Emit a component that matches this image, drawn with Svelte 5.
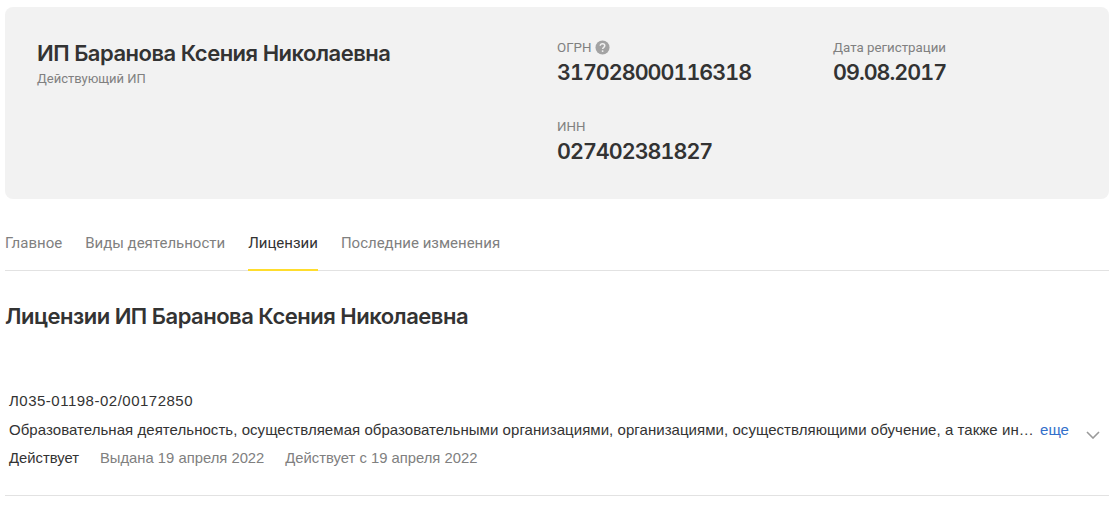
<script>
  const tabs = ['Главное', 'Виды деятельности', 'Лицензии', 'Последние изменения'];
  let active = $state('Лицензии');
</script>

<main class="page">
  <section class="summary">
    <div class="who">
      <h1>ИП Баранова Ксения Николаевна</h1>
      <p class="muted">Действующий ИП</p>
    </div>
    <div class="facts">
      <div class="fact">
        <div class="label">
          ОГРН
          <svg class="help" viewBox="0 0 16 16" width="15" height="15" aria-hidden="true">
            <circle cx="8" cy="8" r="7.5" fill="#a3a3a3" />
            <path d="M5.6 6.2c0-1.4 1-2.2 2.4-2.2s2.4.8 2.4 2.1c0 1-.6 1.5-1.3 2-.6.4-.9.7-.9 1.4" fill="none" stroke="#f2f2f2" stroke-width="1.6" />
            <circle cx="8.1" cy="11.8" r="1" fill="#f2f2f2" />
          </svg>
        </div>
        <div class="value">317028000116318</div>
      </div>
      <div class="fact">
        <div class="label">Дата регистрации</div>
        <div class="value">09.08.2017</div>
      </div>
      <div class="fact">
        <div class="label">ИНН</div>
        <div class="value">027402381827</div>
      </div>
    </div>
  </section>

  <nav class="tabs">
    {#each tabs as tab}
      <button class:active={active === tab} onclick={() => (active = tab)}>{tab}</button>
    {/each}
  </nav>

  <h2>Лицензии ИП Баранова Ксения Николаевна</h2>

  <article class="license">
    <div class="body">
      <div class="number">Л035-01198-02/00172850</div>
      <div class="desc">
        <span class="clip">Образовательная деятельность, осуществляемая образовательными организациями, организациями, осуществляющими обучение, а также индивидуальными предпринимателями</span>
        <a href="#more">еще</a>
      </div>
      <div class="meta">
        <span class="state">Действует</span>
        <span>Выдана 19 апреля 2022</span>
        <span>Действует с 19 апреля 2022</span>
      </div>
    </div>
    <svg class="chevron" viewBox="0 0 14 8" width="14" height="8" aria-hidden="true">
      <path d="M1 1l6 6 6-6" fill="none" stroke="#9a9a9a" stroke-width="1.6" />
    </svg>
  </article>
</main>

<style>
  :global(body) {
    background: #fff;
    color: #333;
    font-family: Roboto, "Liberation Sans", sans-serif;
  }

  .page {
    padding: 7px 3px 20px 5px;
  }

  .summary {
    display: flex;
    height: 192px;
    box-sizing: border-box;
    padding: 32px 32px 0;
    background: #f2f2f2;
    border-radius: 8px;
  }

  .who {
    width: 520px;
  }

  h1 {
    margin: 0;
    font: 600 22px/28px Inter, Roboto, sans-serif;
    letter-spacing: -0.5px;
  }

  .muted {
    margin: 4px 0 0;
    font-size: 13px;
    line-height: 16px;
    color: #808080;
  }

  .facts {
    display: grid;
    grid-template-columns: 276px 1fr;
    row-gap: 32px;
    align-content: start;
  }

  .label {
    display: flex;
    align-items: center;
    gap: 4px;
    height: 16px;
    font-size: 13.3px;
    color: #808080;
  }

  .help {
    display: block;
  }

  .value {
    margin-top: 3px;
    font: 600 21.5px/28px Inter, Roboto, sans-serif;
    font-variant-numeric: tabular-nums;
    letter-spacing: -0.97px;
  }

  .tabs {
    display: flex;
    gap: 23px;
    margin-top: 17px;
    border-bottom: 1px solid #e2e2e2;
  }

  .tabs button {
    height: 55px;
    margin-bottom: -1px;
    padding: 0;
    border: 0;
    border-bottom: 2px solid transparent;
    background: none;
    font: 15px Roboto, sans-serif;
    color: #808080;
    cursor: pointer;
  }

  .tabs button.active {
    color: #333;
    border-bottom-color: #ffdd2d;
  }

  h2 {
    margin: 32px 0 0;
    font: 600 22px/26px Inter, Roboto, sans-serif;
    letter-spacing: -0.5px;
  }

  .license {
    display: flex;
    align-items: center;
    gap: 17px;
    margin-top: 59px;
    padding: 3px 9px 27px 4px;
    border-bottom: 1px solid #e2e2e2;
  }

  .body {
    flex: 1;
    min-width: 0;
  }

  .number {
    font: 15px/20px "Liberation Sans", sans-serif;
    letter-spacing: 0.5px;
  }

  .desc {
    display: flex;
    gap: 5px;
    margin-top: 9px;
    font: 15px/20px "Liberation Sans", sans-serif;
    letter-spacing: 0.05px;
  }

  .clip {
    flex: 1;
    min-width: 0;
    overflow: hidden;
    white-space: nowrap;
    text-overflow: ellipsis;
  }

  .desc a {
    color: #336fca;
    text-decoration: none;
  }

  .meta {
    display: flex;
    gap: 21px;
    margin-top: 8px;
    font: 14.8px/20px "Liberation Sans", sans-serif;
    color: #808080;
  }

  .state {
    color: #333;
  }

  .chevron {
    margin-top: 10px;
  }
</style>
